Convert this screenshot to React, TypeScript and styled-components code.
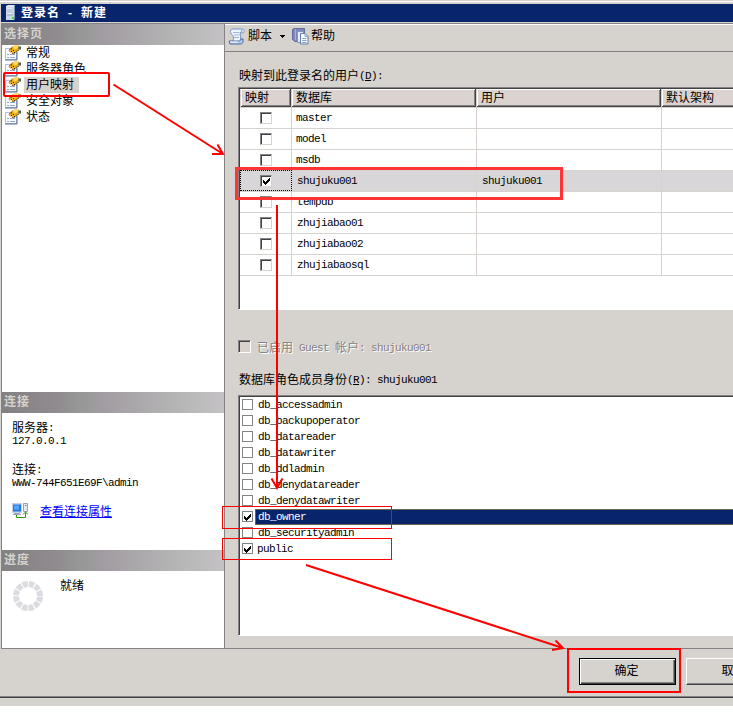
import React from "react";
import styled, { createGlobalStyle, css } from "styled-components";

const face = "#d6d3ce";
const shade = "#848284";
const dark = "#424142";
const navy = "#08246b";

const GlobalStyle = createGlobalStyle`
  * { box-sizing: border-box; }
  html, body { margin: 0; background: #fff; overflow: hidden; }
  body {
    font-family: "Noto Sans CJK SC", sans-serif;
    font-size: 12px;
    line-height: 16px;
    color: #000;
    white-space: pre;
  }
`;

const Dialog = styled.div`
  position: relative;
  width: 733px;
  height: 706px;
  overflow: hidden;
  display: flex;
  flex-direction: column;
  background: ${face};
`;

const Latin = styled.span`
  font-family: "Liberation Mono", monospace;
  font-size: 11px;
  letter-spacing: -0.6px;
  line-height: 1;
  vertical-align: 1px;
`;

const TitleBar = styled.header`
  flex: none;
  height: 23px;
  border-top: 1px solid ${face};
  box-shadow: inset 0 1px #fff;
  padding: 3px 0 1px 1px;
  display: flex;
`;

const TitleFill = styled.div`
  flex: 1;
  height: 18px;
  background: ${navy};
  color: #fff;
  font-weight: 700;
  letter-spacing: 1px;
  line-height: 16px;
  display: flex;
  padding-left: 4px;
  gap: 4px;
`;

const TitleDash = styled.span`
  display: inline-block;
  width: 21px;
  text-align: center;
`;

const Body = styled.div`
  flex: none;
  height: 626px;
  display: flex;
  border: solid ${shade};
  border-width: 1px 0 1px 0;
  margin-left: 1px;
`;

const Sidebar = styled.aside`
  flex: none;
  width: 224px;
  background: #fff;
  border: solid ${shade};
  border-width: 0 1px 0 1px;
  display: flex;
  flex-direction: column;
`;

const SideSection = styled.section<{ $height: number }>`
  height: ${(p) => p.$height}px;
  display: flex;
  flex-direction: column;
`;

const SideHeading = styled.h2`
  flex: none;
  margin: 0;
  height: 21px;
  padding-left: 2px;
  font-size: 12px;
  font-weight: 700;
  letter-spacing: 1px;
  line-height: 17px;
  color: ${face};
  background: linear-gradient(90deg, #828082 0, #918c90 26%, #969796 34%, #a39da3 47%, #aaa7aa 60%, #b3b2b3 74%, #c4c2c4 100%);
`;

const PageItem = styled.div`
  display: flex;
  height: 16px;
  padding-left: 3px;
  gap: 3px;
`;

const PageLabel = styled.span<{ $selected?: boolean }>`
  height: 16px;
  padding: 0 5px 0 2px;
  line-height: 14px;
  background: ${(p) => (p.$selected ? face : "transparent")};
`;

const ConnectionInfo = styled.div`
  padding: 7px 0 0 10px;
  line-height: 13px;
`;

const InfoLine = styled.div<{ $gap?: boolean }>`
  height: 13px;
  margin-top: ${(p) => (p.$gap ? 16 : 0)}px;
`;

const LinkRow = styled.div`
  display: flex;
  gap: 12px;
  margin-top: 15px;
  align-items: flex-start;
`;

const Link = styled.a`
  color: #00f;
  line-height: 15px;
  text-decoration: underline;
  text-underline-offset: 1px;
`;

const Progress = styled.div`
  display: flex;
  gap: 16px;
  padding: 6px 0 0 10px;

  svg { margin-top: 3px; }
`;

const Main = styled.main`
  flex: 1;
  min-width: 0;
  display: flex;
  flex-direction: column;
`;

const Toolbar = styled.div`
  flex: none;
  height: 28px;
  border-top: 1px solid #fff;
  border-bottom: 1px solid ${shade};
  padding: 3px 0 0 3px;
  display: flex;
`;

const ToolLabel = styled.span<{ $tight?: boolean }>`
  margin-left: ${(p) => (p.$tight ? 2 : 3)}px;
  line-height: 14px;
`;

const Caret = styled.svg`
  margin: 7px 7px 0 8px;
`;

const Content = styled.div`
  padding: 15px 0 0 13px;
  display: flex;
  flex-direction: column;
`;

const FieldLabel = styled.div`
  height: 20px;
  padding-left: 1px;
  line-height: 15px;
`;

const Key = styled.span`
  text-decoration: underline;
`;

const sunken = css`
  border: solid ${shade};
  border-width: 1px 0 1px 1px;
  border-bottom-color: #fff;
  box-shadow: inset 1px 1px ${dark};
  background: #fff;
`;

const GridBox = styled.div`
  ${sunken}
  height: 223px;
  padding: 1px 0 0 1px;
  overflow: hidden;
`;

const GridRow = styled.div<{ $selected?: boolean }>`
  display: grid;
  grid-template-columns: 52px 185px 185px 1fr;
  height: 21px;
  background: ${(p) => (p.$selected ? "#d9d6da" : "#fff")};
`;

const GridHead = styled(GridRow)`
  height: 18px;
  background: ${face};
`;

const HeadCell = styled.div`
  height: 18px;
  margin-right: 1px;
  padding-left: 4px;
  line-height: 15px;
  background: #dbd3d0;
  border: solid ${dark};
  border-width: 0 1px 1px 0;
  box-shadow: inset 1px 1px #fff, inset -1px -1px ${shade};

  &:first-child { margin-left: 1px; }
  &:last-child { margin-right: -2px; }
`;

const Cell = styled.div<{ $first?: boolean; $focus?: boolean; $selected?: boolean }>`
  border-right: 1px solid #d9d1ce;
  border-top: 1px solid #d6d3ce;
  padding-left: ${(p) => (p.$first ? 20 : p.$selected ? 5 : 4)}px;
  padding-top: ${(p) => (p.$first ? 4 : 0)}px;
  line-height: 17px;
  &:last-child { border-right: 0; }
  ${(p) => p.$focus && css`
    outline: 1px dotted #000;
    outline-offset: -1px;
  `}
`;

const GridEnd = styled.div`
  height: 1px;
  background: ${face};
`;

const GridCheck = styled.div<{ $disabled?: boolean }>`
  flex: none;
  width: 12px;
  height: 12px;
  padding: 1px 0 0 1px;
  border: 1px solid;
  border-color: ${shade} ${face} ${face} ${shade};
  box-shadow: inset 1px 1px ${dark};
  background: ${(p) => (p.$disabled ? "#d9d0cc" : "#fff")};
  display: flex;
  ${(p) => p.$disabled && css`
    width: 13px;
    height: 13px;
    border-color: ${shade} #fff #fff ${shade};
  `}
`;

const ListCheck = styled.div`
  flex: none;
  width: 11px;
  height: 11px;
  margin-top: 2px;
  padding-top: 1px;
  border: 1px solid ${shade};
  background: #fff;
  display: flex;
`;

const GuestRow = styled.div`
  display: flex;
  gap: 6px;
  height: 31px;
  margin-top: 30px;
  color: ${shade};
  text-shadow: 1px 1px #fff;
  line-height: 13px;
`;

const RoleList = styled.div`
  ${sunken}
  height: 241px;
  margin-top: 4px;
  padding: 1px 0 0 3px;
`;

const RoleRow = styled.div`
  display: flex;
  gap: 2px;
  height: 16px;
`;

const RoleName = styled.div<{ $selected?: boolean; $checked?: boolean }>`
  flex: 1;
  height: 16px;
  line-height: 11px;
  border: 1px solid ${(p) => (p.$selected ? "#6b6550" : "transparent")};
  border-right: 0;
  padding-left: ${(p) => (p.$checked && !p.$selected ? 1 : 2)}px;
  background: ${(p) => (p.$selected ? navy : "transparent")};
  color: ${(p) => (p.$selected ? "#fff" : "#000")};
`;

const Footer = styled.footer`
  flex: none;
  height: 49px;
  padding: 9px 0 0 579px;
  display: flex;
  gap: 10px;
  border-bottom: 1px solid ${dark};
  box-shadow: inset 0 -1px ${shade};
`;

const Button = styled.button<{ $default?: boolean }>`
  flex: none;
  width: 97px;
  height: 27px;
  padding: 0 2px 3px 0;
  font: 12px/16px "Noto Sans CJK SC", sans-serif;
  color: #000;
  background: ${face};
  border: 1px solid;
  border-color: #fff ${dark} ${dark} #fff;
  box-shadow: inset -1px -1px ${shade};
  ${(p) => p.$default && css`
    border-color: #000;
    box-shadow: inset 1px 1px #fff, inset -1px -1px ${dark}, inset -2px -2px ${shade};
  `}
`;

const Annotations = styled.svg`
  position: absolute;
  left: 0;
  top: 0;
  pointer-events: none;
`;

const Tick = () => (
  <svg width="9" height="9" viewBox="0 0 9 9" shapeRendering="crispEdges">
    <path d="M1 3h1v1h1v1h1v-1h1v-1h1v-1h1v-1h1v3h-1v1h-1v1h-1v1h-1v1h-1v-1h-1v-1h-1z" />
  </svg>
);

const ServerIcon = () => (
  <svg width="12" height="18" viewBox="0 0 12 18">
    <path d="M1 2l2-1h7l-1 2v13H1z" fill="#dfe8f4" />
    <path d="M9 3l1-2v14l-1 1z" fill="#7f98b8" />
    <path d="M1 3h8v13H1z" fill="#c9d7e8" />
    <path d="M2 5h5M2 7h5M2 9h5" stroke="#fff" />
    <path d="M2 6h5M2 8h5M2 11h6" stroke="#7890b0" strokeWidth=".7" />
    <path d="M7 13h2v2H7z" fill="#42d331" />
  </svg>
);

const PropertyIcon = () => (
  <svg width="16" height="16" viewBox="0 0 16 16">
    <path d="M.5 3.500h11v11H.5z" fill="#f7faff" stroke="#b5bedb" />
    <path d="M0 15h12M12 7v8" stroke="#5a6a8c" />
    <path d="M2 9.500h2M5 9.500h5M2 12.500h2M5 12.500h5" stroke="#94a6d6" />
    <path d="M4 5l3-3.500L10 .5h4V5l-3 1.500L9 9 7 7.500 4 7z" fill="#e9ac1c" />
    <path d="M8 1.500l3-1 3 1-2 2-3 1z" fill="#ffd965" />
    <path d="M4 5.500l3-3M7 8l1.500 1L11 6.500 14 5" stroke="#7b5a18" fill="none" />
    <path d="M6 3.500h1v1H6zM8 5h1v1H8zM6 6h1v1H6zM9 7h1v1H9z" fill="#3d2f10" />
    <path d="M13.500 1.500H16v3h-2.500z" fill="#42615f" />
  </svg>
);

const ScriptIcon = () => (
  <svg width="17" height="17" viewBox="0 0 17 17">
    <path d="M4 1h10c3 0 3 4 0 4l-2-.5 1 9H4c2-2 2-5 0-7C2 5 2 2 4 1z" fill="#eef5ff" stroke="#7790c4" />
    <path d="M13 1.500c2 .5 2 3 0 3z" fill="#91a9dc" />
    <path d="M5 4.500h6M6 7h5M6 9.500h5" stroke="#a0b5df" />
    <path d="M1 13h10c1 0 2-1 2-2h2v2c0 2-1 3-3 3H2z" fill="#b8cdf1" stroke="#4c659c" />
    <path d="M2 14h8" stroke="#fff" />
  </svg>
);

const HelpIcon = () => (
  <svg width="17" height="17" viewBox="0 0 17 17">
    <path d="M.5 1.500l1-1h11v13H3l-2.500-2z" fill="#7f88b8" stroke="#63699c" />
    <path d="M3.500 1v11" stroke="#aab1d8" />
    <path d="M5.500 3.500h5l2 2v9h-7z" fill="#e5edfa" stroke="#8397bc" />
    <path d="M8.500 5.500h4.500l3 3v7.500H8.500z" fill="#f8fbff" stroke="#637da9" />
    <path d="M13 5.500v3h3M10 10.500h4.500M10 12.500h4.500M10 14.500h4.500" stroke="#8aa2c7" fill="none" />
  </svg>
);

const ConnectionIcon = () => (
  <svg width="16" height="16" viewBox="0 0 16 16">
    <path d="M0 0h10v10H0z" fill="#c3cfe4" />
    <path d="M1 1.500h8v7H1z" fill="#2878e0" />
    <path d="M2 2.500h5v4H2z" fill="#52a8ff" />
    <path d="M2 10h6v1h1v1H1v-1h1z" fill="#9aa5b8" />
    <path d="M11.500.5h4v8h-4z" fill="#e4e8ef" stroke="#9aa2b2" />
    <path d="M13 2.500h1.500" stroke="#7484a0" />
    <path d="M4.500 12v2.500h9V10M11 11.500l2.500-2.500 2.500 2.500" stroke="#299800" fill="none" />
  </svg>
);

const Spinner = () => (
  <svg width="32" height="32" viewBox="0 0 32 32">
    <circle cx="16" cy="16" r="12" fill="none" stroke="#dedbe0" strokeWidth="6" strokeDasharray="5.180 1.103" strokeDashoffset="-.55" />
  </svg>
);

const pages = ["常规", "服务器角色", "用户映射", "安全对象", "状态"];

const databases = [
  { name: "master" },
  { name: "model" },
  { name: "msdb" },
  { name: "shujuku001", user: "shujuku001", mapped: true },
  { name: "tempdb", inset: true },
  { name: "zhujiabao01", inset: true },
  { name: "zhujiabao02", inset: true },
  { name: "zhujiabaosql", inset: true },
];

const roles = [
  "db_accessadmin",
  "db_backupoperator",
  "db_datareader",
  "db_datawriter",
  "db_ddladmin",
  "db_denydatareader",
  "db_denydatawriter",
  "db_owner",
  "db_securityadmin",
  "public",
];

const granted = new Set(["db_owner", "public"]);

export default function App() {
  return (
    <>
      <GlobalStyle />
      <Dialog>
        <TitleBar>
          <TitleFill>
            <ServerIcon />
            <span>登录名<TitleDash>-</TitleDash>新建</span>
          </TitleFill>
        </TitleBar>
        <Body>
          <Sidebar>
            <SideSection $height={368}>
              <SideHeading>选择页</SideHeading>
              {pages.map((page) => (
                <PageItem key={page}>
                  <PropertyIcon />
                  <PageLabel $selected={page === "用户映射"}>{page}</PageLabel>
                </PageItem>
              ))}
            </SideSection>
            <SideSection $height={158}>
              <SideHeading>连接</SideHeading>
              <ConnectionInfo>
                <InfoLine>服务器<Latin>:</Latin></InfoLine>
                <InfoLine><Latin>127.0.0.1</Latin></InfoLine>
                <InfoLine $gap>连接<Latin>:</Latin></InfoLine>
                <InfoLine><Latin>WWW-744F651E69F\admin</Latin></InfoLine>
                <LinkRow>
                  <ConnectionIcon />
                  <Link>查看连接属性</Link>
                </LinkRow>
              </ConnectionInfo>
            </SideSection>
            <SideSection $height={98}>
              <SideHeading>进度</SideHeading>
              <Progress>
                <Spinner />
                <span>就绪</span>
              </Progress>
            </SideSection>
          </Sidebar>
          <Main>
            <Toolbar>
              <ScriptIcon />
              <ToolLabel>脚本</ToolLabel>
              <Caret width="5" height="3" viewBox="0 0 5 3" shapeRendering="crispEdges">
                <path d="M0 0h5v1h-1v1h-1v1h-1v-1h-1v-1h-1z" />
              </Caret>
              <HelpIcon />
              <ToolLabel $tight>帮助</ToolLabel>
            </Toolbar>
            <Content>
              <FieldLabel>映射到此登录名的用户<Latin>(<Key>D</Key>):</Latin></FieldLabel>
              <GridBox>
                <GridHead>
                  <HeadCell>映射</HeadCell>
                  <HeadCell>数据库</HeadCell>
                  <HeadCell>用户</HeadCell>
                  <HeadCell>默认架构</HeadCell>
                </GridHead>
                {databases.map((db) => (
                  <GridRow key={db.name} $selected={db.mapped}>
                    <Cell $first $focus={db.mapped}>
                      <GridCheck>{db.mapped && <Tick />}</GridCheck>
                    </Cell>
                    <Cell $selected={db.mapped || db.inset}><Latin>{db.name}</Latin></Cell>
                    <Cell $selected={db.mapped}><Latin>{db.user}</Latin></Cell>
                    <Cell />
                  </GridRow>
                ))}
                <GridEnd />
              </GridBox>
              <GuestRow>
                <GridCheck $disabled />
                <span>已启用<Latin> Guest </Latin>帐户<Latin>: shujuku001</Latin></span>
              </GuestRow>
              <FieldLabel>数据库角色成员身份<Latin>(<Key>R</Key>): shujuku001</Latin></FieldLabel>
              <RoleList>
                {roles.map((role) => (
                  <RoleRow key={role}>
                    <ListCheck>{granted.has(role) && <Tick />}</ListCheck>
                    <RoleName $selected={role === "db_owner"} $checked={granted.has(role)}>
                      <Latin>{role}</Latin>
                    </RoleName>
                  </RoleRow>
                ))}
              </RoleList>
            </Content>
          </Main>
        </Body>
        <Footer>
          <Button $default>确定</Button>
          <Button>取消</Button>
        </Footer>
        <Annotations width="733" height="706" viewBox="0 0 733 706" fill="none" stroke="#f00">
          <rect x="4" y="73" width="105" height="23" rx="1" strokeWidth="2" />
          <rect x="236.500" y="168.500" width="325" height="30" stroke="#ff3535" strokeWidth="3" />
          <rect x="222.500" y="506.500" width="169" height="22" shapeRendering="crispEdges" />
          <rect x="222.500" y="538.500" width="169" height="21" shapeRendering="crispEdges" />
          <rect x="568" y="649" width="112" height="43" strokeWidth="2" />
          <g strokeWidth="2">
            <path d="M113.500 84.500L223 154M217.500 144.500L223 154H212" />
            <path d="M277 205V488M271.500 478.500L277 488L282.500 478.500" />
            <path d="M306 565L563 648M555.500 640.500L563 648L552 650" />
          </g>
        </Annotations>
      </Dialog>
    </>
  );
}
